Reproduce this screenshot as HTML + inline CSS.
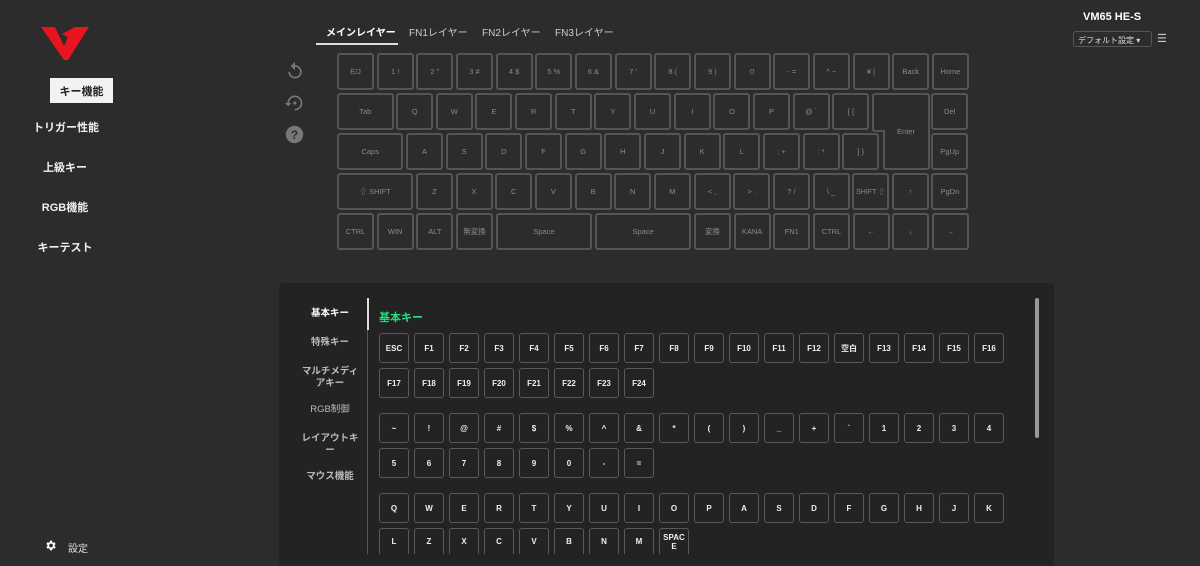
<!DOCTYPE html><html><head><meta charset="utf-8"><style>
*{box-sizing:border-box;margin:0;padding:0}
body{width:1200px;height:566px;overflow:hidden;background:#2c2c2c;font-family:"Liberation Sans","Noto Sans CJK JP",sans-serif;position:relative;color:#fff}
.a{position:absolute}
.nav{position:absolute;left:0;width:160px;text-align:center;font-size:11px;font-weight:bold;color:#f0f0f0}
.kb{position:absolute;left:337px;top:53px;width:640px}
.row{display:flex;height:37px;margin-bottom:3px}
.k{height:37px;border:2px solid #555;border-radius:3px;margin-right:2.67px;display:flex;align-items:center;justify-content:center;font-size:7.5px;color:#8a8a8a;flex:none;background:#2c2c2c;white-space:nowrap}
.sp{flex:none;margin-right:2.67px}
.tab{position:absolute;top:24px;font-size:10px;color:#ccc}
.panel{position:absolute;left:279px;top:283px;width:775px;height:283px;background:#232323;border-radius:4px 4px 0 0}
.ln{position:absolute;left:0;width:90px;text-align:center;font-size:9.5px;font-weight:bold;color:#bbb;line-height:12px}
.sk{position:absolute;width:30px;height:30px;border:1.5px solid #5a5a5a;border-radius:3px;display:flex;align-items:center;justify-content:center;font-size:8px;font-weight:bold;color:#eee;text-align:center;line-height:9px}
</style></head><body>
<svg class="a" style="left:41px;top:27px" width="50" height="34" viewBox="0 0 50 34"><polygon points="0,0 14,0 23,19 27,10 21,7 34,0 48,0 27,33 23,33" fill="#e8141e"/></svg>
<div class="a" style="left:50px;top:78px;width:63px;height:25px;background:#f2f2f2;color:#222;font-size:11px;font-weight:bold;display:flex;align-items:center;justify-content:center">キー機能</div>
<div class="nav" style="left:-14px;top:119px">トリガー性能</div>
<div class="nav" style="left:-15px;top:159px">上級キー</div>
<div class="nav" style="left:-15px;top:199px">RGB機能</div>
<div class="nav" style="left:-15px;top:239px">キーテスト</div>
<svg class="a" style="left:44px;top:539px" width="13" height="13" viewBox="0 0 24 24"><path fill="#fff" d="M19.4 13a7.5 7.5 0 000-2l2.1-1.6-2-3.5-2.5 1a7.5 7.5 0 00-1.7-1L15 3h-4l-.4 2.9a7.5 7.5 0 00-1.700 1l-2.5-1-2 3.5L6.6 11a7.5 7.5 0 000 2l-2.1 1.6 2 3.5 2.5-1a7.5 7.5 0 001.7 1L11 21h4l.4-2.9a7.5 7.5 0 001.7-1l2.5 1 2-3.5zM13 15.5a3.5 3.5 0 110-7 3.5 3.5 0 010 7z"/></svg>
<div class="a" style="left:68px;top:540px;font-size:10px;color:#ddd">設定</div>

<div class="tab" style="left:326px;color:#fff;font-weight:bold">メインレイヤー</div>
<div class="a" style="left:316px;top:43px;width:82px;height:2px;background:#ddd"></div>
<div class="tab" style="left:409px">FN1レイヤー</div>
<div class="tab" style="left:482px">FN2レイヤー</div>
<div class="tab" style="left:555px">FN3レイヤー</div>
<div class="a" style="left:1083px;top:11px;font-size:11px;font-weight:bold">VM65 HE-S</div>
<div class="a" style="left:1073px;top:31px;width:79px;height:16px;border:1px solid #555;border-radius:3px;font-size:8px;color:#ddd;padding:3px 0 0 4px">デフォルト設定 ▾</div>
<div class="a" style="left:1157px;top:32px;font-size:11px;color:#ccc">☰</div>

<svg class="a" style="left:285px;top:61px" width="20" height="20" viewBox="0 0 24 24"><path d="M12 5V1L7 6l5 5V7a6 6 0 11-6 6H4a8 8 0 108-8z" fill="#777"/></svg>
<svg class="a" style="left:284px;top:93px" width="20" height="20" viewBox="0 0 24 24"><path d="M13 3a9 9 0 00-9 9H1l4 4 4-4H6a7 7 0 117 7v2a9 9 0 000-18z" fill="#777"/><circle cx="13" cy="12" r="2" fill="#777"/></svg>
<svg class="a" style="left:285px;top:125px" width="19" height="19" viewBox="0 0 24 24"><circle cx="12" cy="12" r="11" fill="#777"/><text x="12" y="17.5" font-size="15" font-weight="bold" text-anchor="middle" fill="#2c2c2c" font-family="Liberation Sans">?</text></svg>

<div class="kb">
<div class="row"><div class="k" style="width:37px">E/J</div><div class="k" style="width:37px">1 !</div><div class="k" style="width:37px">2 "</div><div class="k" style="width:37px">3 #</div><div class="k" style="width:37px">4 $</div><div class="k" style="width:37px">5 %</div><div class="k" style="width:37px">6 &amp;</div><div class="k" style="width:37px">7 '</div><div class="k" style="width:37px">8 (</div><div class="k" style="width:37px">9 )</div><div class="k" style="width:37px">0</div><div class="k" style="width:37px">- =</div><div class="k" style="width:37px">^ ~</div><div class="k" style="width:37px">¥ |</div><div class="k" style="width:37px">Back</div><div class="k" style="width:37px">Home</div></div>
<div class="row"><div class="k" style="width:56.5px">Tab</div><div class="k" style="width:37px">Q</div><div class="k" style="width:37px">W</div><div class="k" style="width:37px">E</div><div class="k" style="width:37px">R</div><div class="k" style="width:37px">T</div><div class="k" style="width:37px">Y</div><div class="k" style="width:37px">U</div><div class="k" style="width:37px">I</div><div class="k" style="width:37px">O</div><div class="k" style="width:37px">P</div><div class="k" style="width:37px">@ `</div><div class="k" style="width:37px">{ [</div><div class="sp" style="width:56.5px"></div><div class="k" style="width:37px">Del</div></div>
<div class="row"><div class="k" style="width:66.4px">Caps</div><div class="k" style="width:37px">A</div><div class="k" style="width:37px">S</div><div class="k" style="width:37px">D</div><div class="k" style="width:37px">F</div><div class="k" style="width:37px">G</div><div class="k" style="width:37px">H</div><div class="k" style="width:37px">J</div><div class="k" style="width:37px">K</div><div class="k" style="width:37px">L</div><div class="k" style="width:37px">; +</div><div class="k" style="width:37px">: *</div><div class="k" style="width:37px">] }</div><div class="sp" style="width:46.6px"></div><div class="k" style="width:37px">PgUp</div></div>
<div class="row"><div class="k" style="width:76.3px">⇧ SHIFT</div><div class="k" style="width:37px">Z</div><div class="k" style="width:37px">X</div><div class="k" style="width:37px">C</div><div class="k" style="width:37px">V</div><div class="k" style="width:37px">B</div><div class="k" style="width:37px">N</div><div class="k" style="width:37px">M</div><div class="k" style="width:37px">&lt; ,</div><div class="k" style="width:37px">&gt; .</div><div class="k" style="width:37px">? /</div><div class="k" style="width:37px">\ _</div><div class="k" style="width:37px;font-size:7px">SHIFT ⇧</div><div class="k" style="width:37px">↑</div><div class="k" style="width:37px">PgDn</div></div>
<div class="row"><div class="k" style="width:37px">CTRL</div><div class="k" style="width:37px">WIN</div><div class="k" style="width:37px">ALT</div><div class="k" style="width:37px">無変換</div><div class="k" style="width:96.5px">Space</div><div class="k" style="width:96.5px">Space</div><div class="k" style="width:37px">変換</div><div class="k" style="width:37px">KANA</div><div class="k" style="width:37px">FN1</div><div class="k" style="width:37px">CTRL</div><div class="k" style="width:37px">←</div><div class="k" style="width:37px">↓</div><div class="k" style="width:37px">→</div></div>
<svg class="a" style="left:535px;top:39px" width="60" height="80" viewBox="0 0 60 80"><path d="M4,2 H55 Q57,2 57,4 V75 Q57,77 55,77 H14 Q12,77 12,75 V39 H3 Q1,39 1,37 V4 Q1,2 4,2 Z" fill="none" stroke="#555" stroke-width="2"/><text x="34" y="42" font-size="7.5" fill="#8a8a8a" text-anchor="middle" font-family="Liberation Sans">Enter</text></svg>
</div>

<div class="panel">
<div class="ln" style="top:25px;color:#fff;left:6px">基本キー</div>
<div class="ln" style="top:54px;left:6px">特殊キー</div>
<div class="ln" style="top:83px;left:6px">マルチメディ<br>アキー</div>
<div class="ln" style="top:121px;left:6px;font-weight:normal">RGB制御</div>
<div class="ln" style="top:150px;left:6px">レイアウトキ<br>ー</div>
<div class="ln" style="top:188px;left:6px">マウス機能</div>
<div class="a" style="left:88px;top:15px;width:1px;height:256px;background:#555"></div>
<div class="a" style="left:88px;top:15px;width:2px;height:32px;background:#ddd"></div>
<div class="a" style="left:100px;top:26px;font-size:11px;font-weight:bold;color:#1fe07a">基本キー</div>
<div class="a" style="left:756px;top:15px;width:4px;height:140px;background:#999;border-radius:2px"></div>
</div>
<div id="keys"></div>
<script>
var rows=[[333,"ESC F1 F2 F3 F4 F5 F6 F7 F8 F9 F10 F11 F12 空白 F13 F14 F15 F16"],[368,"F17 F18 F19 F20 F21 F22 F23 F24"],[413,"~ ! @ # $ % ^ & * ( ) _ + ` 1 2 3 4"],[448,"5 6 7 8 9 0 - ="],[493,"Q W E R T Y U I O P A S D F G H J K"],[528,"L Z X C V B N M SPAC<br>E"]];
var h="";rows.forEach(function(r){r[1].split(" ").forEach(function(t,i){h+='<div class="sk" style="left:'+(379+i*35)+'px;top:'+r[0]+'px'+(r[0]==528?';height:26px;border-bottom:none;border-radius:3px 3px 0 0':'')+'">'+t.replace("&","&amp;")+'</div>';});});
document.getElementById("keys").innerHTML=h;
</script>
</body></html>
